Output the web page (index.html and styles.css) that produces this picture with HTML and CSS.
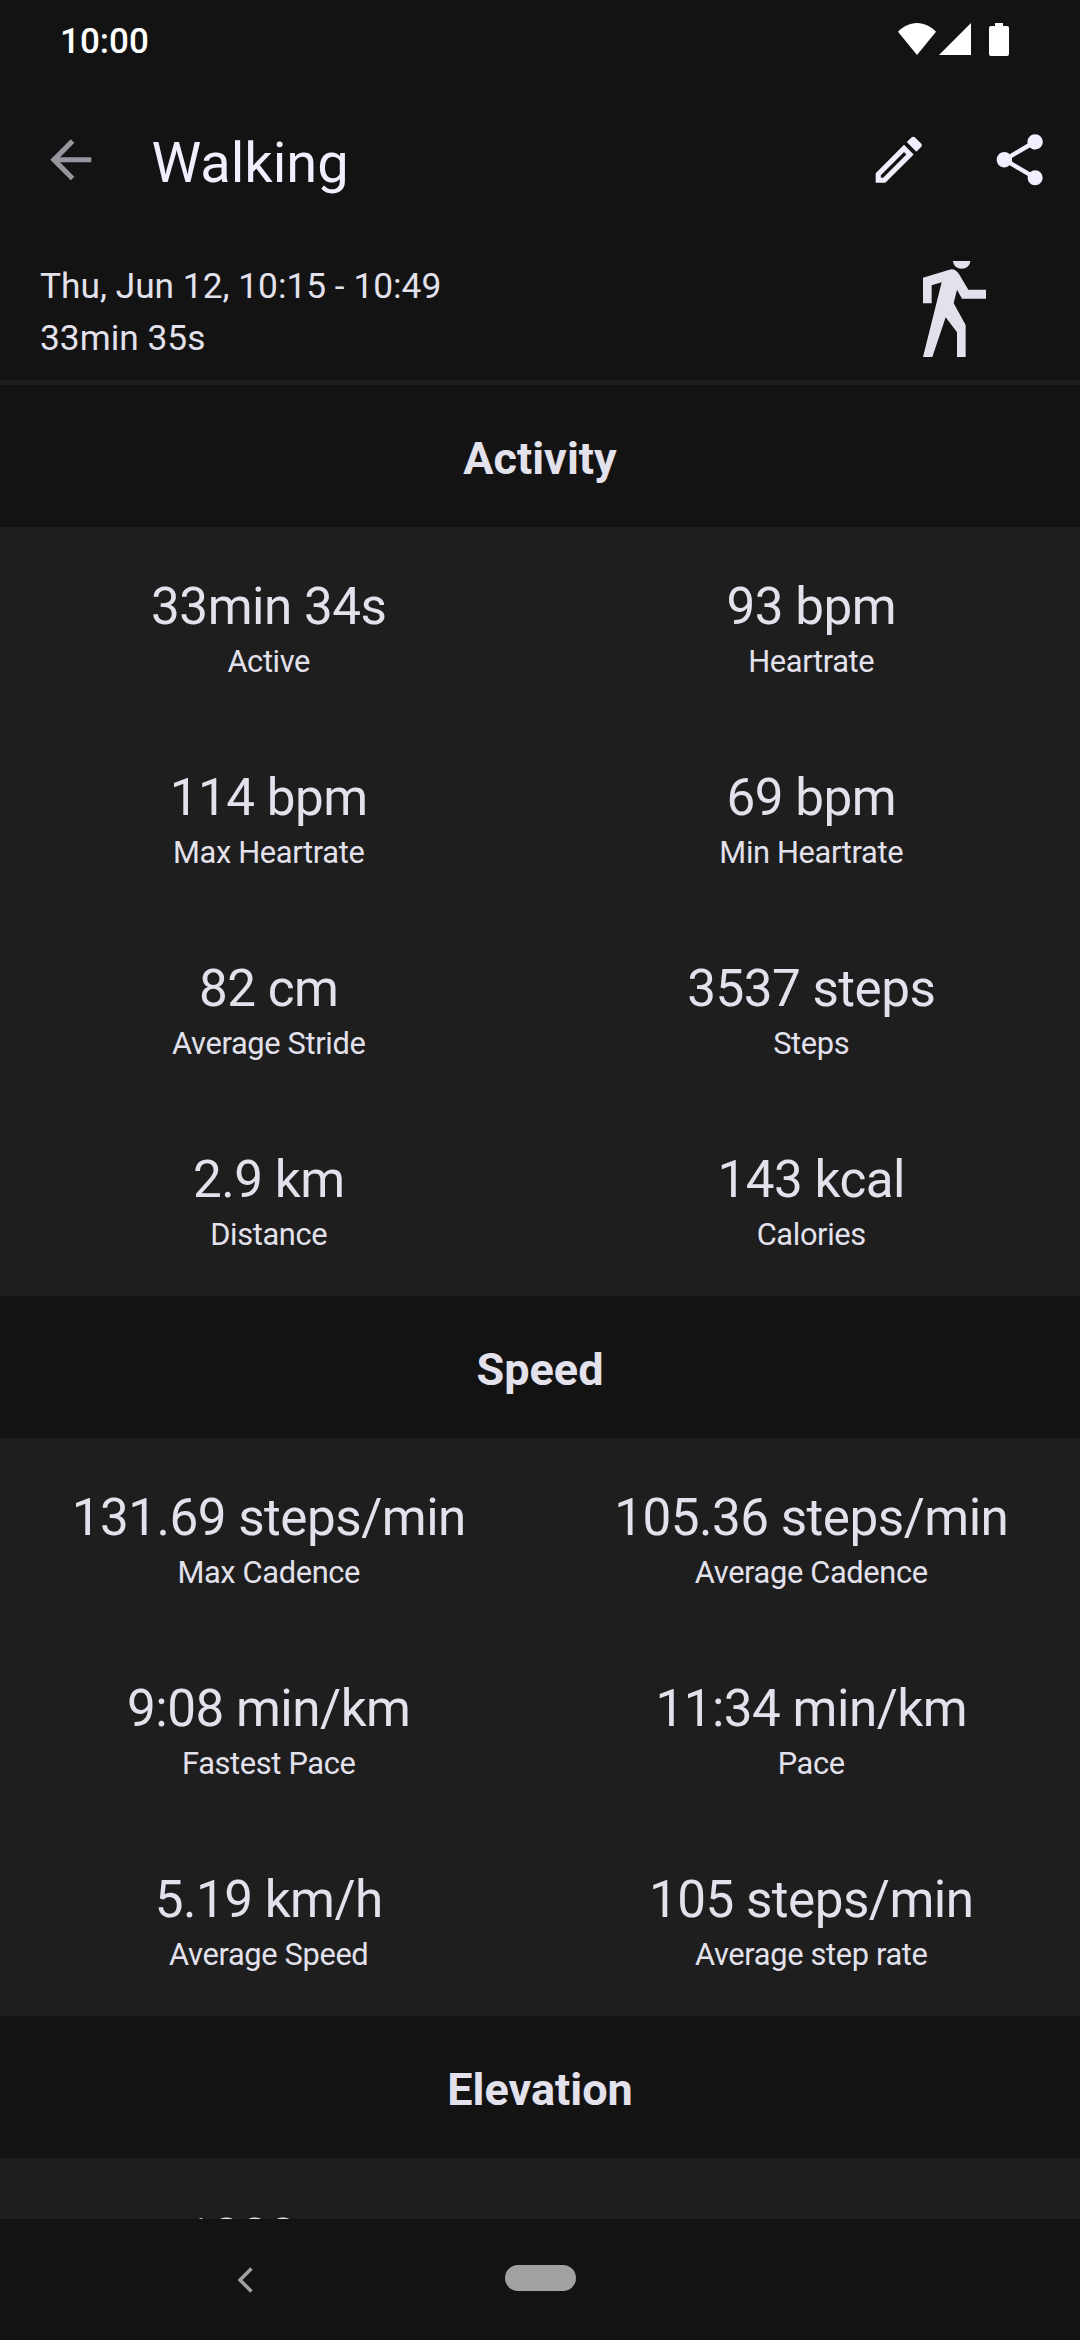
FILE: index.html
```html
<!DOCTYPE html>
<html lang="en">
<head>
    <meta charset="UTF-8">
    <meta name="viewport" content="width=device-width, initial-scale=1.0">
    <title>Walking</title>
    <link rel="stylesheet" href="styles.css">
</head>
<body>
    <div class="screen">
        <div class="status-bar">
            <span class="clock">10:00</span>
            <div class="status-icons">
                <svg class="wifi" viewBox="0 0 38 32"><path d="M0 8.7C5 3.500 11.500 0 19 0s14 3.500 19 8.700L19 32z"/></svg>
                <svg class="signal" viewBox="0 0 32 32"><path d="M32 0v32H0z"/></svg>
                <svg class="battery" viewBox="0 0 20 33"><path d="M6 0h8v3h4a2 2 0 0 1 2 2v26a2 2 0 0 1-2 2H2a2 2 0 0 1-2-2V5a2 2 0 0 1 2-2h4z"/></svg>
            </div>
        </div>

        <header class="toolbar">
            <svg class="icon icon-back" viewBox="0 0 24 24"><path d="M20 11H7.830l5.590-5.590L12 4l-8 8 8 8 1.410-1.410L7.830 13H20v-2z"/></svg>
            <h1 class="title">Walking</h1>
            <svg class="icon" viewBox="0 0 24 24"><path d="M14.060 9.020l.92.92L5.920 19H5v-.92l9.060-9.060M17.660 3c-.25 0-.51.1-.7.29l-1.830 1.830 3.750 3.750 1.830-1.830c.39-.39.39-1.020 0-1.410l-2.340-2.340c-.2-.2-.45-.29-.71-.29zm-3.600 3.190L3 17.250V21h3.750L17.810 9.940l-3.750-3.750z"/></svg>
            <svg class="icon icon-share" viewBox="0 0 24 24"><path d="M18 16.080c-.76 0-1.440.3-1.960.77L8.910 12.700c.05-.23.09-.46.09-.7s-.04-.47-.09-.7l7.050-4.110c.54.5 1.250.81 2.040.81 1.660 0 3-1.340 3-3s-1.340-3-3-3-3 1.340-3 3c0 .24.04.47.09.7L8.040 9.810C7.500 9.310 6.790 9 6 9c-1.660 0-3 1.340-3 3s1.340 3 3 3c.79 0 1.500-.31 2.040-.81l7.120 4.160c-.05.21-.08.43-.08.65 0 1.610 1.310 2.920 2.920 2.920s2.920-1.310 2.920-2.920-1.310-2.920-2.920-2.920z"/></svg>
        </header>

        <div class="summary">
            <div class="summary-text">
                <div>Thu, Jun 12, 10:15 - 10:49</div>
                <div>33min 35s</div>
            </div>
            <svg class="walker" viewBox="189 93 189 288">
                <path d="M279 93h52a26 23 0 0 1-52 0z"/>
                <path d="M189 143l79-24q17-5 29 13l28 47h53v27h-72l-15-27-10 41 36 65v96h-26v-74l-34-45-40 119h-28l56-224-30 9v54h-26z"/>
            </svg>
        </div>

        <main class="stats">
            <h2 class="section-title">Activity</h2>
            <div class="stat-grid">
                <div class="stat"><div class="value">33min 34s</div><div class="label">Active</div></div>
                <div class="stat"><div class="value">93 bpm</div><div class="label">Heartrate</div></div>
                <div class="stat"><div class="value">114 bpm</div><div class="label">Max Heartrate</div></div>
                <div class="stat"><div class="value">69 bpm</div><div class="label">Min Heartrate</div></div>
                <div class="stat"><div class="value">82 cm</div><div class="label">Average Stride</div></div>
                <div class="stat"><div class="value">3537 steps</div><div class="label">Steps</div></div>
                <div class="stat"><div class="value">2.9 km</div><div class="label">Distance</div></div>
                <div class="stat"><div class="value">143 kcal</div><div class="label">Calories</div></div>
            </div>

            <h2 class="section-title">Speed</h2>
            <div class="stat-grid">
                <div class="stat"><div class="value">131.69 steps/min</div><div class="label">Max Cadence</div></div>
                <div class="stat"><div class="value">105.36 steps/min</div><div class="label">Average Cadence</div></div>
                <div class="stat"><div class="value">9:08 min/km</div><div class="label">Fastest Pace</div></div>
                <div class="stat"><div class="value">11:34 min/km</div><div class="label">Pace</div></div>
                <div class="stat"><div class="value">5.19 km/h</div><div class="label">Average Speed</div></div>
                <div class="stat"><div class="value">105 steps/min</div><div class="label">Average step rate</div></div>
            </div>

            <h2 class="section-title">Elevation</h2>
            <div class="stat-grid">
                <div class="stat"><div class="value">1000 m</div></div>
            </div>
        </main>

        <nav class="nav-bar">
            <svg class="nav-back" viewBox="0 0 15 26"><path d="M13.500 1.500L2 13l11.500 11.500"/></svg>
            <div class="nav-home"></div>
        </nav>
    </div>
</body>
</html>
```
FILE: styles.css
```css
:root {
    --background: #131313;
    --surface: #1e1e1e;
    --text: #e3e1ec;
    --text-bright: #efefff;
    --nav-gray: #a1a1a1;
}

* {
    margin: 0;
    padding: 0;
    box-sizing: border-box;
}

body {
    background-color: var(--background);
    color: var(--text);
    font-family: Roboto, sans-serif;
}

svg {
    display: block;
    flex: none;
    fill: currentColor;
}

.screen {
    display: flex;
    flex-direction: column;
    width: 1080px;
    height: 2340px;
    overflow: hidden;
}

.status-bar {
    display: flex;
    justify-content: space-between;
    height: 80px;
    padding: 20px 71px 0 60px;
    color: #fff;
}

.clock {
    font-size: 35px;
    font-weight: 500;
    line-height: 43px;
}

.status-icons {
    display: flex;
    padding-top: 3px;
}

.wifi {
    width: 38px;
    height: 32px;
}

.signal {
    width: 32px;
    height: 32px;
    margin-left: 3px;
}

.battery {
    width: 20px;
    height: 33px;
    margin-left: 18px;
}

.toolbar {
    display: flex;
    align-items: center;
    height: 159px;
    padding: 0 30px 0 40px;
    color: var(--text-bright);
}

.icon {
    width: 61.5px;
    height: 61.5px;
}

.icon-back {
    color: #97969f;
}

.icon-share {
    margin-left: 59px;
}

.title {
    flex: 1;
    margin-left: 50px;
    padding-top: 6px;
    font-size: 56px;
    font-weight: 400;
    line-height: 66px;
}

.summary {
    display: flex;
    justify-content: space-between;
    height: 141px;
    padding: 22px 94px 0 40px;
}

.summary-text {
    margin-top: -1px;
    font-size: 35.3px;
    line-height: 52px;
}

.walker {
    width: 63px;
    height: 96px;
}

.stats {
    display: flex;
    flex: 1;
    flex-direction: column;
    gap: 5px;
    min-height: 0;
    padding-top: 5px;
    background-color: var(--surface);
    overflow: hidden;
}

.section-title {
    flex: none;
    height: 142px;
    padding-top: 5px;
    background-color: var(--background);
    font-size: 45px;
    font-weight: 700;
    line-height: 137px;
    text-align: center;
}

.stat-grid {
    display: grid;
    flex: none;
    grid-template-columns: 1fr 1fr;
    grid-auto-rows: 186px;
    gap: 5px;
}

.stat {
    padding-top: 44px;
    text-align: center;
}

.value {
    font-size: 51.2px;
    line-height: 62px;
    letter-spacing: -0.5px;
}

.label {
    margin-top: 5px;
    font-size: 30.8px;
    line-height: 38px;
    letter-spacing: -0.35px;
}

.nav-bar {
    display: flex;
    flex: none;
    height: 121px;
    padding: 46px 0 0 238px;
    color: var(--nav-gray);
}

.nav-back {
    width: 15px;
    height: 26px;
    margin-top: 2px;
    fill: none;
    stroke: currentColor;
    stroke-width: 3.5;
}

.nav-home {
    width: 71px;
    height: 26px;
    margin-left: 252px;
    border-radius: 13px;
    background-color: currentColor;
}
```
